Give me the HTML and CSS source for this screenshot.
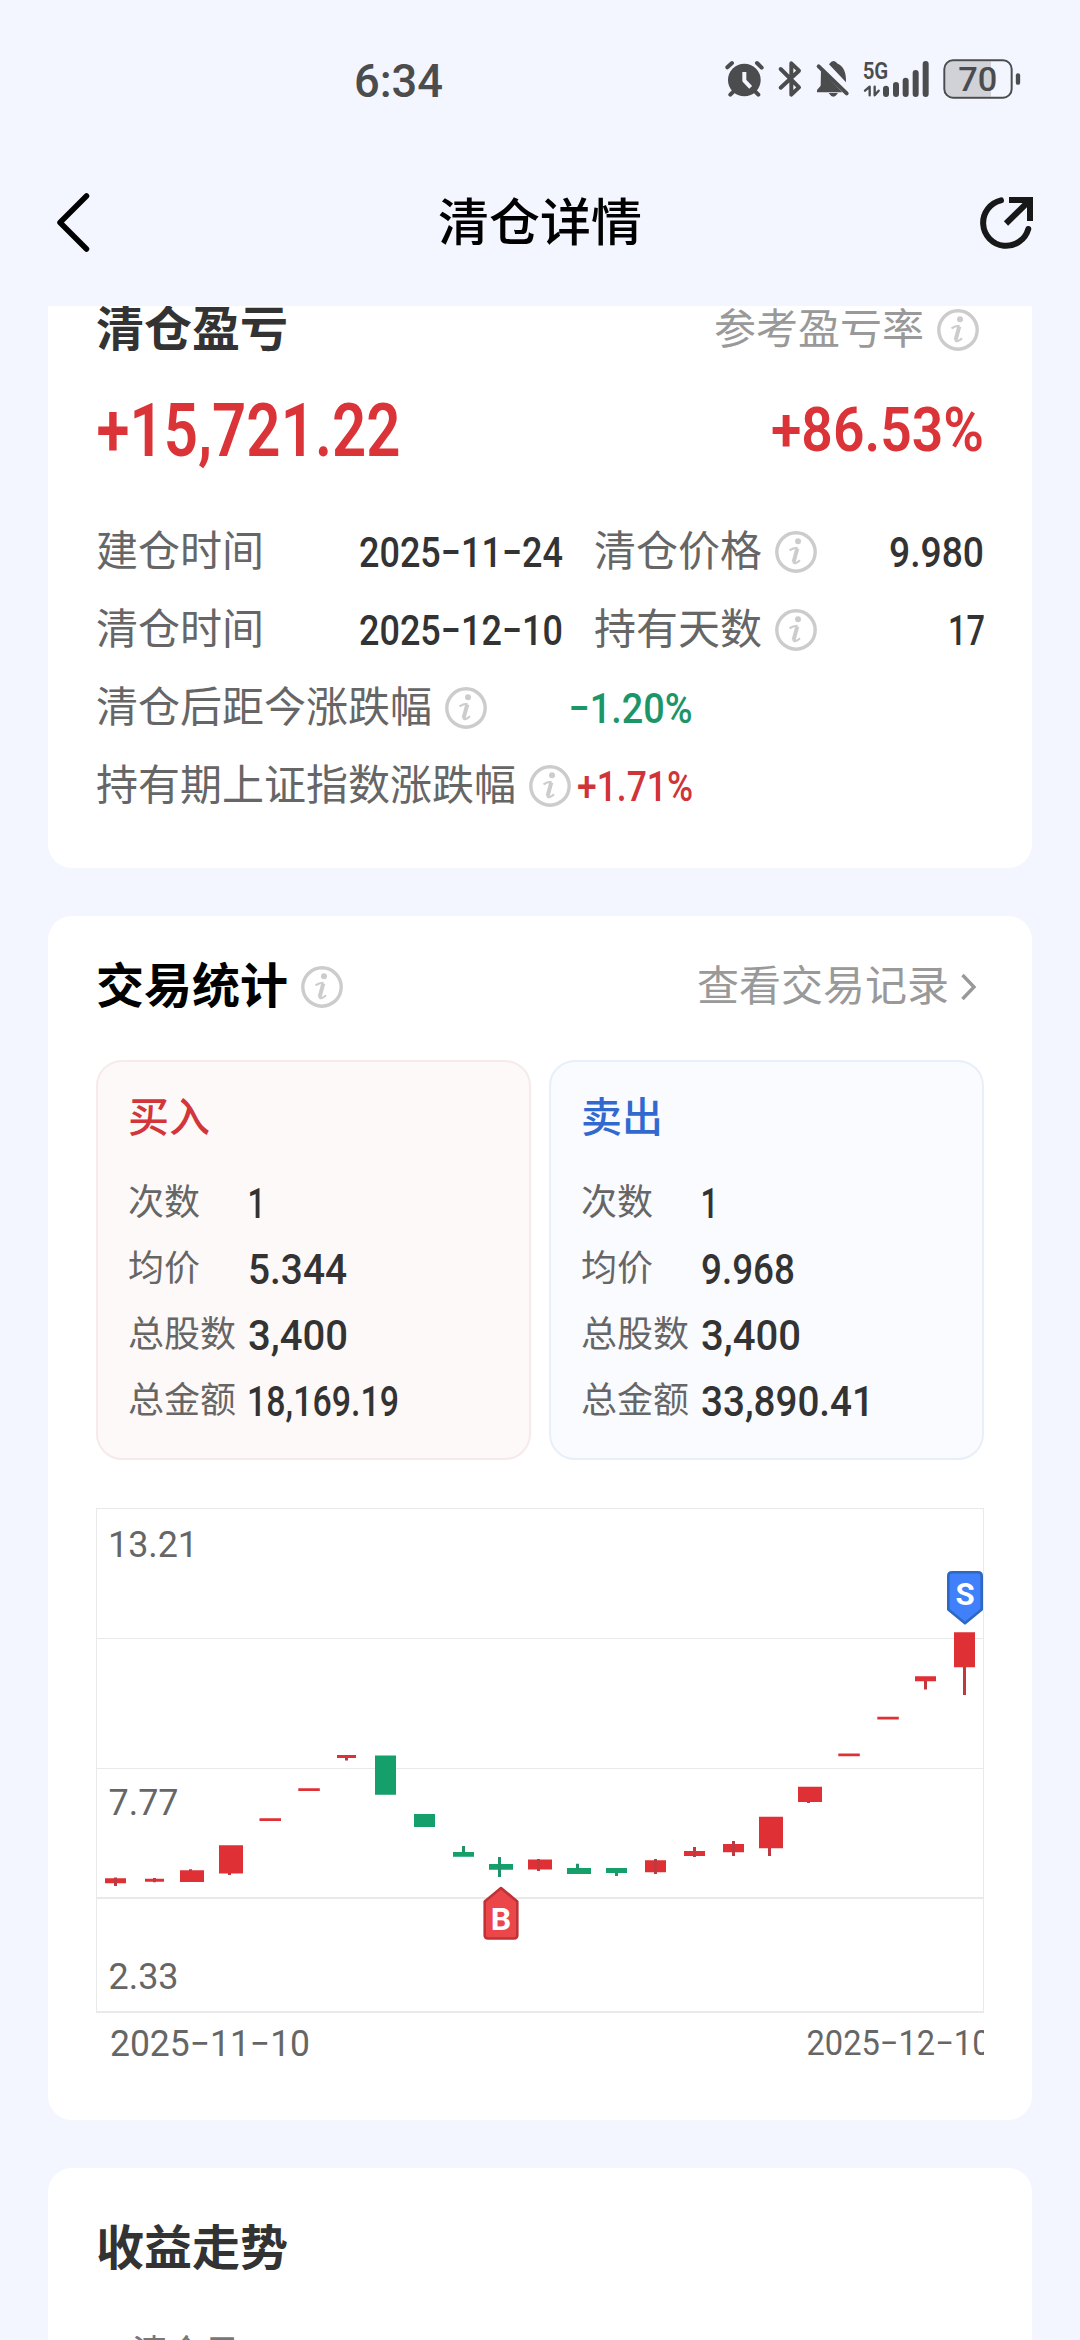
FILE: index.html
```html
<!DOCTYPE html>
<html lang="zh-CN">
<head>
<meta charset="utf-8">
<title>清仓详情</title>
<link rel="stylesheet" href="styles.css">
</head>
<body>
<svg class="defs" width="0" height="0">
  <symbol id="info" viewBox="0 0 42 42">
    <circle cx="21" cy="21" r="19.2" fill="none" stroke="#ccc" stroke-width="3.4"/>
    <circle cx="23" cy="10.2" r="3" fill="#ccc"/>
    <path d="M14.5 19.4C17 17.6 19.5 17 22.6 16.8M25 29.2C22 32 18.6 33.4 18.4 31" fill="none" stroke="#ccc" stroke-width="2"/>
    <path d="M22.3 17.5L18.6 31" fill="none" stroke="#ccc" stroke-width="4"/>
  </symbol>
</svg>

<div class="status">
  <svg class="num clock" width="85" height="33"><text x="-2" y="32.5" font-size="46.5" textLength="89" lengthAdjust="spacingAndGlyphs">6:34</text></svg>
  <svg class="status-icons" width="320" height="60" viewBox="0 0 960 180">
    <g fill="none" stroke="#4b4c4e" stroke-width="12" stroke-linecap="round" stroke-linejoin="round">
      <circle cx="88" cy="90" r="49" fill="#4b4c4e" stroke="none"/>
      <path d="M37 52L51 39M126 39L140 53M46 134L60 120M130 134L116 120"/>
      <path d="M88 66V92L107 112" stroke="#f3f6fe" stroke-linecap="butt"/>
      <path d="M197 57L252 112L229 134V40L252 62L197 113"/>
      <path d="M342 43Q355 24 368 41Q394 51 393 97Z" fill="#4b4c4e" stroke="none"/>
      <path d="M318 60L382 127H306V120L317 107Z" fill="#4b4c4e" stroke="none"/>
      <path d="M311 49L395 130"/>
      <path d="M341 129H369Q355 151 341 129Z" fill="#4b4c4e" stroke="none"/>
      <path d="M464 136V110L450 122M479 110V136L491 122" stroke-width="7"/>
      <path d="M513 116V132M543 105V132M572 92V132M602 69V132M632 42V132" stroke-width="18"/>
      <path d="M828 34V140H714Q691 140 691 116V58Q691 34 714 34Z" fill="#d0d2d8" stroke="none"/>
      <rect x="688" y="31" width="202" height="112" rx="26" stroke-width="6"/>
      <path d="M909 76V98" stroke-width="13"/>
    </g>
    <text x="443" y="86" font-size="70" font-weight="600" textLength="77" lengthAdjust="spacingAndGlyphs">5G</text>
    <text x="730" y="122" font-size="98" font-weight="500" textLength="117" lengthAdjust="spacingAndGlyphs">70</text>
  </svg>
</div>

<header class="nav">
  <svg width="36" height="60" viewBox="0 0 36 60"><path d="M29.5 4L3 30.5L29.5 57" fill="none" stroke="#000" stroke-width="5.5" stroke-linecap="round" stroke-linejoin="round"/></svg>
  <h1>清仓详情</h1>
  <svg width="54" height="54" viewBox="0 0 54 54" fill="none" stroke="#181818" stroke-width="6"><path d="M21 5.4A23 23 0 1 0 48.3 34" stroke-linecap="round"/><path d="M29 5H50V26M50 5L26 28.5"/></svg>
</header>

<main>
  <section class="card summary">
    <div class="row head">
      <h2 class="gray">清仓盈亏</h2>
      <div class="pair hint"><span>参考盈亏率</span><svg class="info"><use href="#info"/></svg></div>
    </div>
    <div class="row totals">
      <svg class="num total" width="300" height="53"><text x="-1.5" y="53" font-size="74.5" textLength="304" lengthAdjust="spacingAndGlyphs">+15,721.22</text></svg>
      <svg class="num total" width="209" height="44"><text x="-2" y="44" font-size="61" textLength="213" lengthAdjust="spacingAndGlyphs">+86.53%</text></svg>
    </div>
    <div class="detail">
      <div class="row first"><span class="label">建仓时间</span><svg class="num" width="202" height="30"><text x="-1" y="29.5" font-size="42" textLength="204" lengthAdjust="spacingAndGlyphs">2025−11−24</text></svg></div>
      <div class="row second"><div class="pair"><span class="label">清仓价格</span><svg class="info"><use href="#info"/></svg></div><svg class="num" width="93" height="30"><text x="-1" y="29.5" font-size="42" textLength="95" lengthAdjust="spacingAndGlyphs">9.980</text></svg></div>
    </div>
    <div class="detail">
      <div class="row first"><span class="label">清仓时间</span><svg class="num" width="202" height="30"><text x="-1" y="29.5" font-size="42" textLength="204" lengthAdjust="spacingAndGlyphs">2025−12−10</text></svg></div>
      <div class="row second"><div class="pair"><span class="label">持有天数</span><svg class="info"><use href="#info"/></svg></div><svg class="num" width="34" height="30"><text x="-1" y="29.5" font-size="42" textLength="37" lengthAdjust="spacingAndGlyphs">17</text></svg></div>
    </div>
    <div class="detail">
      <div class="row wide"><div class="pair"><span class="label">清仓后距今涨跌幅</span><svg class="info"><use href="#info"/></svg></div><svg class="num down" width="121" height="31"><text x="-1.5" y="30" font-size="43" textLength="124" lengthAdjust="spacingAndGlyphs">−1.20%</text></svg></div>
    </div>
    <div class="detail">
      <div class="row wide"><div class="pair"><span class="label">持有期上证指数涨跌幅</span><svg class="info"><use href="#info"/></svg></div><svg class="num up" width="113" height="31"><text x="-1" y="30" font-size="43" textLength="116" lengthAdjust="spacingAndGlyphs">+1.71%</text></svg></div>
    </div>
  </section>

  <section class="card trades">
    <div class="row head">
      <div class="pair"><h2>交易统计</h2><svg class="info"><use href="#info"/></svg></div>
      <div class="pair hint"><span>查看交易记录</span><svg width="24" height="30" viewBox="0 0 24 30"><path d="M4.5 3L16 15L4.5 27" fill="none" stroke="#999" stroke-width="3.4"/></svg></div>
    </div>
    <div class="boxes">
      <div class="box buy">
        <h3>买入</h3>
        <div class="stat"><span>次数</span><svg class="num" width="11" height="31"><text x="-1.5" y="30" font-size="42" textLength="18" lengthAdjust="spacingAndGlyphs">1</text></svg></div>
        <div class="stat"><span>均价</span><svg class="num" width="97" height="31"><text x="-1" y="30" font-size="43" textLength="99" lengthAdjust="spacingAndGlyphs">5.344</text></svg></div>
        <div class="stat"><span>总股数</span><svg class="num" width="98" height="31"><text x="-1" y="30" font-size="43" textLength="100" lengthAdjust="spacingAndGlyphs">3,400</text></svg></div>
        <div class="stat"><span>总金额</span><svg class="num" width="149" height="31"><text x="-2" y="30" font-size="43" textLength="152" lengthAdjust="spacingAndGlyphs">18,169.19</text></svg></div>
      </div>
      <div class="box sell">
        <h3>卖出</h3>
        <div class="stat"><span>次数</span><svg class="num" width="11" height="31"><text x="-1.5" y="30" font-size="42" textLength="18" lengthAdjust="spacingAndGlyphs">1</text></svg></div>
        <div class="stat"><span>均价</span><svg class="num" width="92" height="31"><text x="-1" y="30" font-size="43" textLength="94" lengthAdjust="spacingAndGlyphs">9.968</text></svg></div>
        <div class="stat"><span>总股数</span><svg class="num" width="98" height="31"><text x="-1" y="30" font-size="43" textLength="100" lengthAdjust="spacingAndGlyphs">3,400</text></svg></div>
        <div class="stat"><span>总金额</span><svg class="num" width="168" height="31"><text x="-1" y="30" font-size="43" textLength="173" lengthAdjust="spacingAndGlyphs">33,890.41</text></svg></div>
      </div>
    </div>

    <svg class="chart" width="888" height="562" viewBox="96 1508 888 562">
      <g class="grid">
        <path d="M96 1508.5H984M96 1638.5H984M96 1768.5H984M96.5 1508V2012M983.5 1508V2012"/>
        <path d="M96 1898H984M96 2012H984" stroke-width="2"/>
      </g>
      <g class="rise">
        <path d="M105 1878.3h21v5h-21zM145 1878.7h19v3h-19zM180 1870.3h24v11.7h-24zM219 1845.3h24v28.2h-24zM259.5 1818.3h21.5v2.8h-21.5zM298.3 1788.3h21.5v2.8h-21.5zM337 1755h19v3h-19zM528 1859.5h24v10h-24zM645 1860.3h21v12h-21zM684 1851h21v5h-21zM723 1844h21v8.3h-21zM759 1816.7h24v31.6h-24zM798 1786.7h24v15.3h-24zM838.3 1753.5h21.5v2.8h-21.5zM877.3 1716.7h21.5v2.8h-21.5zM915 1676.3h21v5h-21zM954 1632.3h21v35h-21z"/>
        <path class="wick" d="M115.5 1877.5V1886M154.5 1878V1882.3M190.5 1869.3V1871M229.5 1873V1875M346.5 1758V1760.5M538.5 1859V1871M655.5 1859V1874M694.5 1847V1857M733.5 1841V1856M769.5 1848V1856M808.5 1802V1803M925.5 1681V1689.5M964.5 1667V1695"/>
      </g>
      <g class="fall">
        <path d="M375 1755.5h21v39.2h-21zM414 1814h21v13h-21zM453 1852h21v4.7h-21zM489 1864h24v5.7h-24zM567 1868h24v6h-24zM606 1868h21v5h-21z"/>
        <path class="wick" d="M463.5 1846V1853M499.5 1857V1877M577.5 1863.7V1869M616.5 1873V1876"/>
      </g>
      <path d="M501 1888L517.3 1901.5V1935Q517.3 1938.5 514 1938.5H488Q484.7 1938.5 484.7 1935V1901.5Z" fill="#eb474b" stroke="#bf3337" stroke-width="2.6" stroke-linejoin="round"/>
      <path d="M965 1623.3L948.3 1609.5V1576Q948.3 1572.2 952 1572.2H978Q981.7 1572.2 981.7 1576V1609.5Z" fill="#4081fb" stroke="#2f67c4" stroke-width="2.6" stroke-linejoin="round"/>
      <text class="mark" x="501" y="1929.5" font-size="32">B</text>
      <text class="mark" x="965" y="1604.5" font-size="31">S</text>
      <g class="axis">
        <text x="108" y="1557" font-size="37" textLength="90" lengthAdjust="spacingAndGlyphs">13.21</text>
        <text x="108.5" y="1814.5" font-size="37" textLength="70" lengthAdjust="spacingAndGlyphs">7.77</text>
        <text x="108.5" y="1989" font-size="37" textLength="70" lengthAdjust="spacingAndGlyphs">2.33</text>
        <text x="110" y="2056" font-size="36" textLength="200" lengthAdjust="spacingAndGlyphs">2025−11−10</text>
        <text x="806.5" y="2055" font-size="34.5" textLength="184" lengthAdjust="spacingAndGlyphs">2025−12−10</text>
      </g>
    </svg>
  </section>

  <section class="card trend">
    <h2 class="gray">收益走势</h2>
    <div class="legend">清仓日</div>
  </section>
</main>
</body>
</html>
```
FILE: styles.css
```css
* { box-sizing: border-box; margin: 0; padding: 0; }

body {
  width: 1080px;
  height: 2340px;
  overflow: hidden;
  display: flex;
  flex-direction: column;
  background: #f3f6fe;
  color: #333;
  font-family: Roboto, "Noto Sans CJK SC", sans-serif;
}

svg { display: block; flex: none; }
.defs { width: 0; height: 0; }

.status {
  height: 160px;
  flex: none;
  padding: 50px 45px 50px 356px;
  display: flex;
  align-items: center;
  justify-content: space-between;
}
.status-icons text { fill: #4b4c4e; }

.nav {
  height: 146px;
  flex: none;
  padding: 0 46px 22px 57px;
  display: grid;
  grid-template-columns: 100px 1fr 54px;
  align-items: center;
}
.nav h1 {
  font-size: 51px;
  line-height: 60px;
  font-weight: 500;
  color: #000;
  padding-top: 3px;
  text-align: center;
  margin-right: 57px;
}

main { flex: 1; min-height: 0; overflow: hidden; padding: 0 48px; }

.card { background: #fff; border-radius: 24px; padding: 0 48px; margin-bottom: 48px; }
.summary { height: 562px; padding-top: 3px; border-radius: 0 0 24px 24px; }
.trades { height: 1204px; padding-top: 50px; }
.trend { height: 300px; padding-top: 54px; }

.row { display: flex; align-items: center; justify-content: space-between; }
.pair { display: flex; align-items: center; gap: 13px; }
.head { height: 42px; }
.info { width: 42px; height: 42px; }

h2 { font-size: 48px; line-height: 54px; font-weight: 700; color: #000; }
h2.gray { color: #333; }
.hint { color: #999; font-size: 42px; line-height: 48px; padding-right: 5px; }
.trades .hint { padding-right: 2px; gap: 9px; }

.num { overflow: visible; fill: #333; font-weight: 500; }
.clock { fill: #4b4c4e; font-weight: 500; }
.total { fill: #da3338; font-weight: 600; }
.up { fill: #cf3439; }
.down { fill: #1c9669; }

.totals { height: 54px; margin: 51px 2px 57px; }

.detail { display: flex; gap: 32px; height: 78px; align-items: center; padding-right: 1px; }
.label { font-size: 42px; line-height: 48px; color: #666; white-space: nowrap; }
.first { width: 466px; }
.second { flex: 1; }
.wide { width: 595px; }

.boxes { display: grid; grid-template-columns: 1fr 1fr; gap: 18px; margin-top: 52px; }
.box { height: 400px; border: 2px solid; border-radius: 26px; padding: 29px 30px 0; }
.buy { background: #fdf9f8; border-color: #f6eaea; }
.sell { background: #f9fbff; border-color: #e8eff8; }
.box h3 { font-size: 41px; line-height: 54px; font-weight: 500; margin-bottom: 25px; }
.buy h3 { color: #d2353a; }
.sell h3 { color: #3269cf; }
.stat { display: flex; align-items: center; height: 66px; }
.stat span { width: 121px; font-size: 36px; line-height: 42px; color: #666; }

.chart { margin-top: 48px; }
.grid { fill: none; stroke: #e9e9e9; stroke-width: 1; }
.rise { fill: #df3035; stroke: #bf3a40; stroke-width: 0; }
.fall { fill: #149f6b; stroke: #209469; stroke-width: 0; }
.rise .wick, .fall .wick { fill: none; stroke-width: 3; }
.mark { fill: #fff; font-weight: 700; text-anchor: middle; }
.axis { fill: #666; }

.legend { margin: 57px 0 0 36px; font-size: 36px; line-height: 42px; color: #777; }
```
